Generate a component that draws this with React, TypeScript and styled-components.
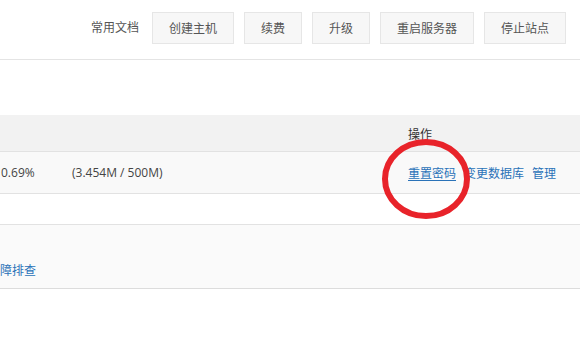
import React from 'react';
import styled, { createGlobalStyle } from 'styled-components';

const GlobalStyle = createGlobalStyle`
  body {
    margin: 0;
    background: #fff;
    font-family: "Open Sans", "Noto Sans CJK SC", sans-serif;
    font-size: 12px;
    color: #333;
  }
`;

const Page = styled.div`
  width: 580px;
  overflow: hidden;
`;

const TopBar = styled.div`
  height: 60px;
  box-sizing: border-box;
  padding: 12px 14px 0 0;
  display: flex;
  justify-content: flex-end;
  align-items: flex-start;
  gap: 10px;
  border-bottom: 1px solid #e4e4e4;
`;

const DocLabel = styled.span`
  line-height: 32px;
  margin-right: 3px;
  color: #555;
`;

const Button = styled.button`
  height: 32px;
  padding: 0 16px;
  background: #f7f7f7;
  border: 1px solid #e6e6e6;
  border-radius: 0;
  font-family: inherit;
  font-size: 12px;
  color: #555;
  outline: 0;
`;

const Spacer = styled.div`
  height: 55px;
`;

const TableWrapper = styled.div`
  position: relative;
`;

const Row = styled.div<{ $bg: string; $height: number }>`
  display: grid;
  grid-template-columns: 72px 336px 1fr;
  align-items: center;
  height: ${p => p.$height}px;
  background: ${p => p.$bg};
  border-bottom: 1px solid #e2e2e2;
`;

const Cell = styled.div`
  white-space: nowrap;
  color: #444;
`;

const FirstCell = styled(Cell)`
  padding-left: 1px;
`;

const HeaderCell = styled(Cell)`
  color: #333;
  padding-top: 2px;
`;

const Actions = styled.div`
  display: flex;
  gap: 8px;
  white-space: nowrap;
`;

const Link = styled.a<{ $active?: boolean }>`
  color: #2a72b8;
  text-decoration: ${p => (p.$active ? 'underline' : 'none')};
  text-underline-offset: 2px;
  cursor: pointer;
`;

const Blank = styled.div`
  height: 30px;
  border-bottom: 1px solid #e2e2e2;
`;

const Section = styled.div`
  height: 64px;
  box-sizing: border-box;
  padding-top: 36px;
  background: #fafafa;
  border-bottom: 1px solid #dcdcdc;
`;

// the first character is cut off by the left edge, as in the screenshot
const TroubleLink = styled(Link)`
  display: inline-block;
  margin-left: -12px;
`;

const Mark = styled.svg`
  position: absolute;
  left: 381px;
  top: 23px;
  pointer-events: none;
`;

const BUTTONS = ['创建主机', '续费', '升级', '重启服务器', '停止站点'];

export default function App() {
  return (
    <Page>
      <GlobalStyle />
      <TopBar>
        <DocLabel>常用文档</DocLabel>
        {BUTTONS.map(label => (
          <Button key={label}>{label}</Button>
        ))}
      </TopBar>
      <Spacer />
      <TableWrapper>
        <Row $bg="#f2f2f2" $height={36}>
          <HeaderCell />
          <HeaderCell />
          <HeaderCell>操作</HeaderCell>
        </Row>
        <Row $bg="#f9f9f9" $height={41}>
          <FirstCell>0.69%</FirstCell>
          <Cell>(3.454M / 500M)</Cell>
          <Actions>
            <Link $active>重置密码</Link>
            <Link>变更数据库</Link>
            <Link>管理</Link>
          </Actions>
        </Row>
        <Blank />
        <Section>
          <TroubleLink>故障排查</TroubleLink>
        </Section>
        <Mark width="90" height="82" viewBox="0 0 90 82">
          <ellipse cx="45" cy="41" rx="41" ry="37" fill="none" stroke="#e8232a" strokeWidth="6" />
        </Mark>
      </TableWrapper>
    </Page>
  );
}
